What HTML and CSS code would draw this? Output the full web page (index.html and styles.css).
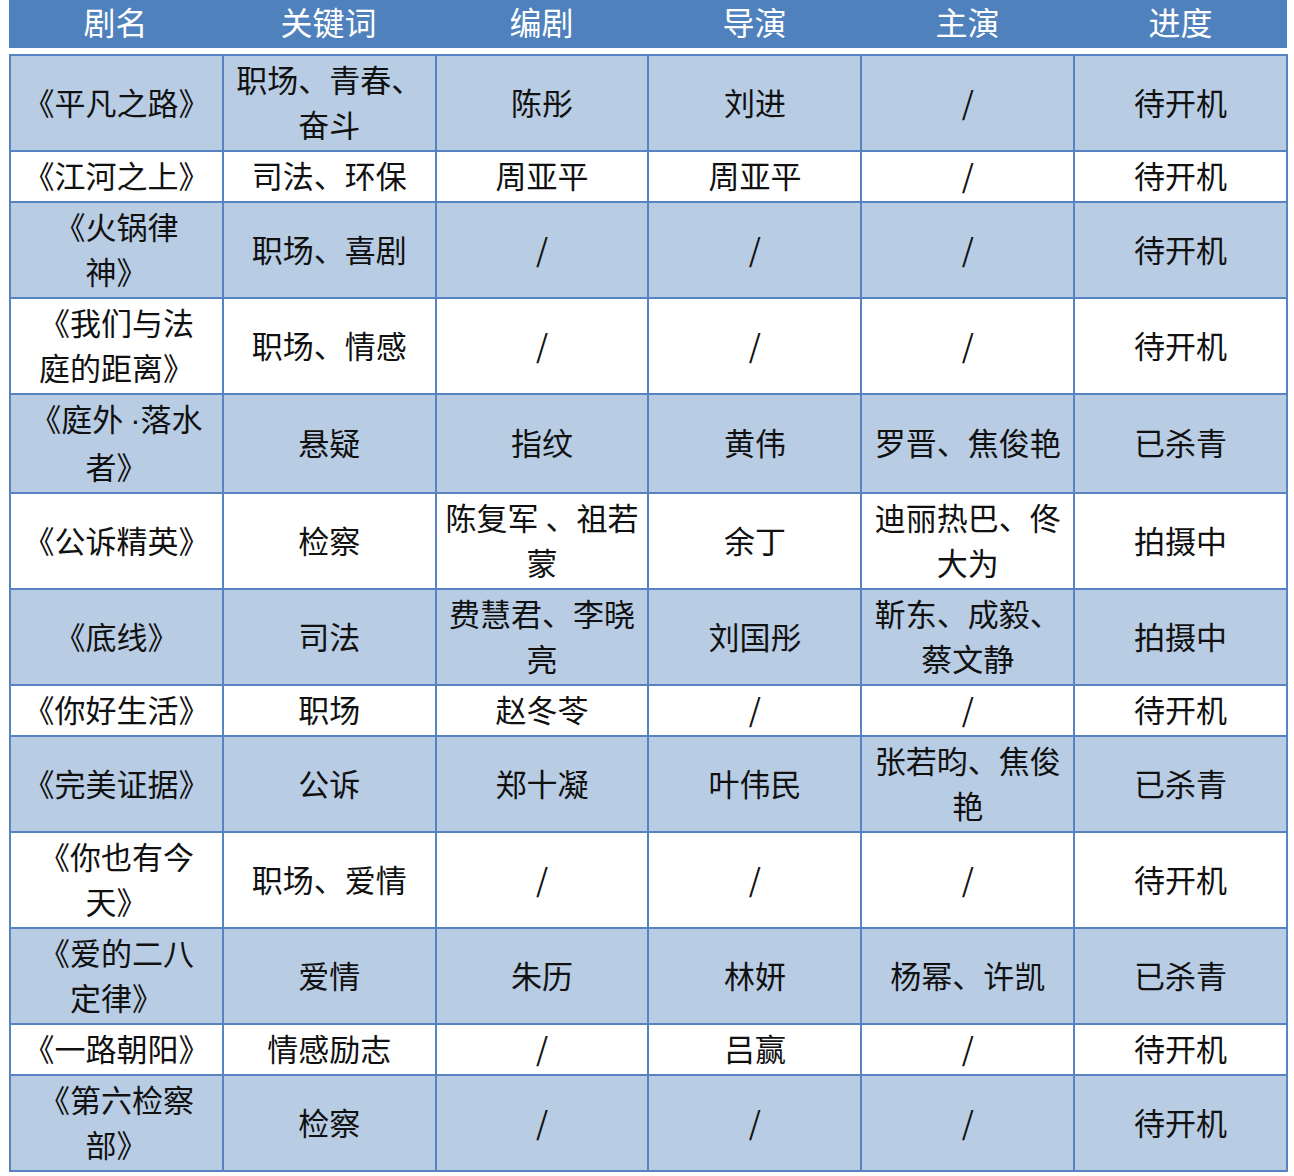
FILE: index.html
```html
<!DOCTYPE html>
<html lang="zh-CN">
<head>
<meta charset="utf-8">
<title>剧目表</title>
<link rel="stylesheet" href="styles.css">
</head>
<body>
<div class="page">
  <div class="head">
    <div>剧名</div><div>关键词</div><div>编剧</div><div>导演</div><div>主演</div><div>进度</div>
  </div>
  <table class="grid">
    <colgroup><col><col><col><col><col><col></colgroup>
    <tbody>
      <tr class="blue"><td>《平凡之路》</td><td>职场、青春、<br>奋斗</td><td>陈彤</td><td>刘进</td><td>/</td><td>待开机</td></tr>
      <tr><td>《江河之上》</td><td>司法、环保</td><td>周亚平</td><td>周亚平</td><td>/</td><td>待开机</td></tr>
      <tr class="blue"><td>《火锅律<br>神》</td><td>职场、喜剧</td><td>/</td><td>/</td><td>/</td><td>待开机</td></tr>
      <tr><td>《我们与法<br>庭的距离》</td><td>职场、情感</td><td>/</td><td>/</td><td>/</td><td>待开机</td></tr>
      <tr class="blue"><td>《庭外 <span class="latin">·</span>落水<br>者》</td><td>悬疑</td><td>指纹</td><td>黄伟</td><td>罗晋、焦俊艳</td><td>已杀青</td></tr>
      <tr><td>《公诉精英》</td><td>检察</td><td>陈复军 、祖若<br>蒙</td><td>余丁</td><td>迪丽热巴、佟<br>大为</td><td>拍摄中</td></tr>
      <tr class="blue"><td>《底线》</td><td>司法</td><td>费慧君、李晓<br>亮</td><td>刘国彤</td><td>靳东、成毅、<br>蔡文静</td><td>拍摄中</td></tr>
      <tr><td>《你好生活》</td><td>职场</td><td>赵冬苓</td><td>/</td><td>/</td><td>待开机</td></tr>
      <tr class="blue"><td>《完美证据》</td><td>公诉</td><td>郑十凝</td><td>叶伟民</td><td>张若昀、焦俊<br>艳</td><td>已杀青</td></tr>
      <tr><td>《你也有今<br>天》</td><td>职场、爱情</td><td>/</td><td>/</td><td>/</td><td>待开机</td></tr>
      <tr class="blue"><td>《爱的二八<br>定律》</td><td>爱情</td><td>朱历</td><td>林妍</td><td>杨幂、许凯</td><td>已杀青</td></tr>
      <tr><td>《一路朝阳》</td><td>情感励志</td><td>/</td><td>吕赢</td><td>/</td><td>待开机</td></tr>
      <tr class="blue"><td>《第六检察<br>部》</td><td>检察</td><td>/</td><td>/</td><td>/</td><td>待开机</td></tr>
    </tbody>
  </table>
</div>
</body>
</html>
```

FILE: styles.css
```css
html, body {
  margin: 0;
  padding: 0;
  background: #ffffff;
}

body {
  font-family: "Noto Sans CJK SC", "Noto Sans", sans-serif;
  color: #111111;
}

.page {
  padding-left: 9px;
}

.head {
  box-sizing: border-box;
  width: 1278px;
  height: 48px;
  padding-bottom: 5px;
  background: #4f81bd;
  display: grid;
  grid-template-columns: repeat(6, 1fr);
  align-items: center;
  color: #ffffff;
  font-size: 32px;
  line-height: 43px;
  text-align: center;
  margin-bottom: 6px;
}

.grid {
  width: 1279px;
  border-collapse: collapse;
  table-layout: fixed;
  font-size: 31px;
  line-height: 45px;
}

.grid td {
  border: 2px solid #5883c2;
  padding: 0 2px 4px;
  text-align: center;
  vertical-align: middle;
  white-space: nowrap;
  overflow: hidden;
}

.grid tr.blue td {
  background: #b8cce4;
}

.latin {
  font-family: "Liberation Sans", sans-serif;
}
```
